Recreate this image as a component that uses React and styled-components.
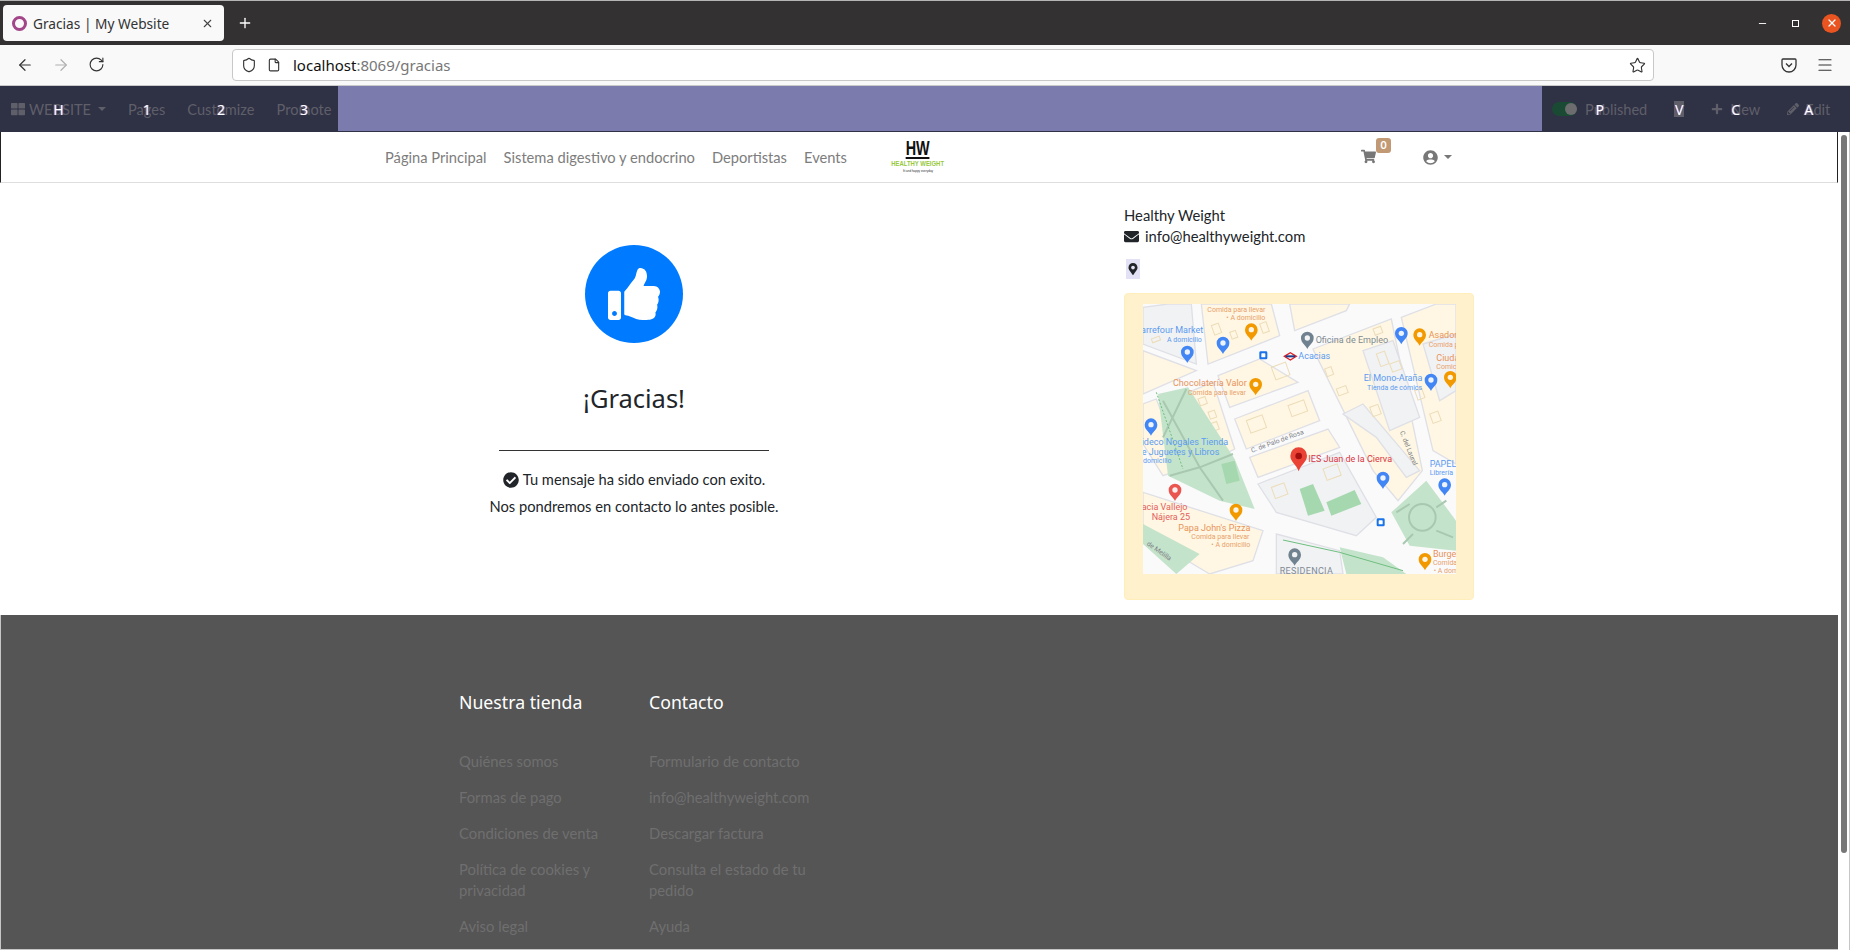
import styled, { createGlobalStyle } from "styled-components";
import { ArrowLeft, ArrowRight, RotateCw, Shield, File, Star, Menu, X, Plus, Minus } from "lucide-react";
import { FaThLarge, FaShoppingCart, FaUserCircle, FaEnvelope, FaCheckCircle, FaMapMarkerAlt, FaPlus, FaPencilAlt, FaThumbsUp } from "react-icons/fa";

const GlobalStyle = createGlobalStyle`
  html, body {
    margin: 0;
    padding: 0;
    height: 950px;
    overflow: hidden;
    background: #fff;
    font-family: "Lato", "Liberation Sans", sans-serif;
  }
  * { box-sizing: border-box; }
`;

const Page = styled.div`
  width: 1850px;
  height: 950px;
  display: flex;
  flex-direction: column;
  overflow: hidden;
`;

/* browser chrome */
const TabBar = styled.div`
  height: 45px;
  flex: none;
  background: #333131;
  border-top: 1px solid #b5b5b5;
  display: flex;
  align-items: center;
  padding: 0 9px 0 3px;
  color: #fff;
`;

const Tab = styled.div`
  width: 221px;
  height: 36px;
  background: #f9f9fa;
  border-radius: 4px;
  display: flex;
  align-items: center;
  padding: 0 10px 0 9px;
  color: #333;
  font: 13.7px "Noto Sans", sans-serif;
`;

const Favicon = styled.span`
  width: 15px;
  height: 15px;
  border: 3px solid #a24689;
  border-radius: 50%;
  margin-right: 6px;
  flex: none;
`;

const TabTitle = styled.span`
  flex: 1;
`;

const NewTab = styled.div`
  margin-left: 13px;
  display: flex;
`;

const WindowControls = styled.div`
  margin-left: auto;
  display: flex;
  align-items: center;
  gap: 21px;
`;

const WinButton = styled.span`
  width: 12px;
  height: 12px;
  display: flex;
  align-items: center;
  justify-content: center;
`;

const RestoreIcon = styled.span`
  width: 7px;
  height: 7px;
  border: 1.5px solid #fff;
`;

const CloseButton = styled.span`
  width: 19px;
  height: 19px;
  border-radius: 50%;
  background: #e95420;
  display: flex;
  align-items: center;
  justify-content: center;
`;

const Toolbar = styled.div`
  height: 41px;
  flex: none;
  background: #f9f9fa;
  border-bottom: 1px solid #c9c9c9;
  display: flex;
  align-items: center;
  padding: 0 16px 0 16px;
  color: #333;
`;

const NavButtons = styled.div`
  display: flex;
  gap: 18px;
  width: 216px;
`;

const UrlBox = styled.div`
  width: 1422px;
  height: 32px;
  background: #fff;
  border: 1px solid #c8c8c8;
  border-radius: 4px;
  display: flex;
  align-items: center;
  padding: 0 7px 0 8px;
  gap: 10px;
  font: 15px "Noto Sans", sans-serif;
`;

const UrlText = styled.span`
  flex: 1;
  margin-left: 2px;
  color: #777;
  & b {
    font-weight: 400;
    color: #111;
  }
`;

const ToolbarEnd = styled.div`
  margin-left: auto;
  display: flex;
  align-items: center;
  gap: 19px;
`;

/* odoo bar */
const EditBar = styled.div`
  height: 46px;
  flex: none;
  background: #7c7bad;
  border-bottom: 1px solid #2f3145;
  display: flex;
  justify-content: space-between;
`;

const BarSection = styled.div`
  background: #2f3145;
  display: flex;
  align-items: center;
  width: ${(p) => p.$width}px;
  padding: ${(p) => p.$padding};
  gap: ${(p) => p.$gap}px;
  color: #5f5f69;
  font-size: 14.6px;
`;

const BarItem = styled.div`
  position: relative;
  display: flex;
  align-items: center;
  gap: ${(p) => p.$gap || 4}px;
  white-space: nowrap;
`;

const Hotkey = styled.span`
  position: absolute;
  left: 50%;
  top: 50%;
  transform: translate(-50%, -50%);
  color: #fff;
  font: 14px "Noto Sans", sans-serif;
  text-shadow: 1px 0 0 #4a6fb0, -1px 0 0 #8a4a4a;
`;

const Caret = styled.span`
  display: inline-block;
  border-left: 4px solid transparent;
  border-right: 4px solid transparent;
  border-top: 4px solid ${(p) => p.$color || "#5f5f69"};
  margin-left: ${(p) => p.$left || 4}px;
`;

const Toggle = styled.span`
  width: 25px;
  height: 14px;
  border-radius: 7px;
  background: #1b4a34;
  position: relative;
  margin-right: 4px;
  &::after {
    content: "";
    position: absolute;
    right: 0;
    top: 1px;
    width: 12px;
    height: 12px;
    border-radius: 50%;
    background: #6d6d70;
  }
`;

const ViewChip = styled.span`
  width: 10px;
  height: 16px;
  background: #5f5f69;
  display: block;
`;

/* site */
const Viewport = styled.div`
  flex: 1;
  display: flex;
  min-height: 0;
`;

const Site = styled.div`
  width: 1838px;
  flex: none;
  display: flex;
  flex-direction: column;
`;

const Scrollbar = styled.div`
  flex: 1;
  background: #fff;
  border-right: 2px solid #c6c6c6;
  padding: 3px 2px 0 3px;
`;

const ScrollThumb = styled.div`
  width: 6px;
  height: 718px;
  border-radius: 3px;
  background: #777;
`;

const Nav = styled.nav`
  height: 51px;
  flex: none;
  display: flex;
  align-items: center;
  padding-left: 385px;
  padding-right: 385px;
  border-left: 1px solid #222;
  border-right: 1px solid #222;
  border-bottom: 1px solid #dedede;
  color: #7d7d7d;
  font-size: 14.7px;
`;

const NavLinks = styled.div`
  width: 506px;
  display: flex;
  gap: 17px;
  margin-left: -1px;
`;

const Logo = styled.div`
  width: 54px;
  height: 34px;
  display: flex;
  flex-direction: column;
  align-items: center;
  line-height: 1;
`;

const LogoMark = styled.span`
  color: #111;
  font: 700 20px/17px "Liberation Sans Narrow", "Liberation Sans", sans-serif;
  border-bottom: 2px solid #111;
  transform: scaleX(0.72);
`;

const LogoName = styled.span`
  color: #97c93d;
  font: 700 8px/10px "Liberation Sans", sans-serif;
  transform: scaleX(0.74);
  white-space: nowrap;
`;

const LogoTag = styled.span`
  color: #333;
  font: 3px/4px "Liberation Sans", sans-serif;
  white-space: nowrap;
`;

const NavEnd = styled.div`
  margin-left: auto;
  display: flex;
  align-items: center;
  color: #777;
`;

const CartLink = styled.span`
  position: relative;
  width: 30px;
  height: 16px;
  margin-right: 32px;
  display: block;
`;

const CartBadge = styled.span`
  position: absolute;
  left: 15px;
  top: -11px;
  width: 15px;
  height: 15px;
  border-radius: 3px;
  background: #c19a75;
  color: #fff;
  font-size: 10.5px;
  font-weight: 700;
  text-align: center;
  line-height: 15px;
`;

const Main = styled.main`
  height: 432px;
  flex: none;
  display: flex;
  justify-content: center;
  color: #212529;
`;

const LeftCol = styled.section`
  width: 760px;
  padding-top: 62px;
`;

const ThanksBox = styled.div`
  width: 570px;
  display: flex;
  flex-direction: column;
  align-items: center;
`;

const ThumbCircle = styled.div`
  width: 98px;
  height: 98px;
  border-radius: 50%;
  background: #007bff;
  color: #fff;
  display: flex;
  align-items: center;
  justify-content: center;
`;

const Title = styled.h1`
  margin: 34px 0 0;
  font: 400 25.5px/42px "Noto Sans", sans-serif;
  color: #212529;
`;

const Rule = styled.hr`
  width: 270px;
  margin: 31px 0 18px;
  border: 0;
  border-top: 1px solid #333;
`;

const Message = styled.p`
  margin: 0 0 6px;
  font-size: 14.7px;
  line-height: 21px;
  display: flex;
  align-items: center;
  gap: 4px;
`;

const RightCol = styled.aside`
  width: 380px;
  padding: 22px 15px 0;
  font-size: 14.8px;
  line-height: 21px;
`;

const ContactRow = styled.div`
  display: flex;
  align-items: center;
  gap: 6px;
`;

const PinChip = styled.span`
  width: 14px;
  height: 20px;
  margin: 12px 0 14px 2px;
  background: #e2e1f5;
  display: flex;
  align-items: center;
  justify-content: center;
`;

const MapCard = styled.div`
  width: 350px;
  height: 307px;
  background: #fff1cc;
  border: 1px solid #ffeeba;
  border-radius: 4px;
  padding: 10px 18px;
`;

const MapSvg = styled.svg`
  width: 313px;
  height: 270px;
  display: block;
`;

const Footer = styled.footer`
  flex: 1;
  background: #555;
  border-left: 1px solid #c6c6c6;
  border-bottom: 1px solid #c6c6c6;
  display: flex;
  gap: 30px;
  padding: 74px 0 0 458px;
  overflow: hidden;
`;

const FooterCol = styled.div`
  width: 160px;
`;

const FooterTitle = styled.h5`
  margin: 0 0 35px;
  color: #fff;
  font: 400 17.7px/27px "Noto Sans", sans-serif;
`;

const FooterLink = styled.div`
  color: #6f6f6f;
  font-size: 14.8px;
  line-height: 21px;
  margin-bottom: 15px;
`;

const storeLinks = ["Quiénes somos", "Formas de pago", "Condiciones de venta", "Política de cookies y privacidad", "Aviso legal"];
const contactLinks = ["Formulario de contacto", "info@healthyweight.com", "Descargar factura", "Consulta el estado de tu pedido", "Ayuda"];

// map pin in the 3x coordinates of the map drawing
const Pin = ({ x, y, color }) => (
  <g transform={`translate(${x} ${y})`}>
    <path d="M0 27C-4 16-19 10-19 -6a19 19 0 0 1 38 0C19 10 4 16 0 27Z" fill={color} />
    <circle cx="0" cy="-6" r="8" fill="#fff" opacity="0.9" />
  </g>
);

const roads = "#dfe0e6";
const yellow = "#fff7e3";
const gray = "#f1f2f4";
const green = "#c4e3cb";

// small building outlines inside the blocks
const buildings = [
  [205, 65, 22, 30], [260, 85, 18, 22], [350, 60, 20, 30], [25, 105, 25, 12], [385, 190, 45, 40],
  [310, 350, 50, 40], [435, 305, 50, 35], [545, 195, 20, 24], [580, 255, 30, 22], [680, 310, 26, 30],
  [165, 285, 22, 22], [195, 325, 20, 22], [200, 360, 22, 24], [385, 550, 40, 36], [540, 495, 45, 36],
  [860, 330, 26, 30], [700, 150, 26, 40], [690, 75, 24, 20], [740, 180, 30, 26], [815, 260, 22, 30],
];

const MapDrawing = () => (
  <MapSvg viewBox="0 0 939 810">
    <rect width="939" height="810" fill="#fafafb" />
    <g stroke={roads} strokeWidth="4">
      <polygon points="75,0 145,0 160,180 0,120 0,10" fill={gray} />
      <polygon points="175,0 385,0 410,95 195,180" fill={yellow} />
      <polygon points="440,0 620,0 610,20 455,80" fill={yellow} />
      <polygon points="510,135 745,45 838,500 765,590 690,500" fill={yellow} />
      <polygon points="600,330 660,300 830,500 790,520 700,400" fill={gray} />
      <polygon points="660,140 750,110 830,340 740,380" fill={gray} />
      <polygon points="775,40 880,0 939,0 939,480 870,440" fill={yellow} />
      <polygon points="840,120 939,90 939,260 890,290" fill={gray} />
      <polygon points="225,215 350,165 465,235 260,310" fill={yellow} />
      <polygon points="275,345 495,260 530,350 310,435" fill={yellow} />
      <polygon points="320,460 555,375 590,430 345,520" fill={yellow} />
      <polygon points="345,540 590,445 700,640 640,695 400,625" fill={gray} />
      <polygon points="135,265 210,235 275,435 215,465" fill={yellow} />
      <polygon points="0,300 40,285 120,495 60,515 0,420" fill={yellow} />
      <polygon points="0,565 360,680 330,770 200,810 0,690" fill={yellow} />
      <polygon points="400,690 590,740 600,810 400,810" fill={gray} />
      <polygon points="0,140 160,200 0,270" fill={yellow} />
    </g>
    <g fill="none" stroke="#ecdcb8" strokeWidth="3">
      {buildings.map(([x, y, w, h]) => (
        <rect key={`${x}-${y}`} x={x} y={y} width={w} height={h} transform={`rotate(-20 ${x} ${y})`} />
      ))}
    </g>
    <g fill={green}>
      <polygon points="45,270 135,250 275,465 335,615 230,590 75,515" />
      <polygon points="0,660 170,750 100,810 0,720" />
      <polygon points="745,625 850,530 939,650 939,740 800,725" />
      <polygon points="590,730 720,760 790,810 610,810" />
    </g>
    <g fill="#a5d8ae">
      <polygon points="470,555 510,540 545,620 495,635" />
      <polygon points="550,595 635,558 655,600 565,635" />
      <polygon points="235,480 275,470 290,530 250,540" />
    </g>
    <g fill="none" stroke="#a8c9b0" strokeWidth="6">
      <path d="M60 290 170 490 240 590M130 255 60 400M170 490 80 515M170 490 270 450" />
      <circle cx="838" cy="640" r="40" />
      <path d="M800 600 760 625M880 610 910 590M810 690 780 720M880 680 930 700" />
    </g>
    <path d="M420 708 590 745 780 800" fill="none" stroke="#6fbf7f" strokeWidth="3" />
    <path d="M40 265 120 495" fill="none" stroke="#6fbf7f" strokeWidth="3" strokeDasharray="6 5" />

    <Pin x={240} y={123} color="#4285f4" />
    <Pin x={133} y={150} color="#4285f4" />
    <Pin x={325} y={83} color="#f29900" />
    <Pin x={493} y={108} color="#70828f" />
    <Pin x={775} y={94} color="#4285f4" />
    <Pin x={830} y={98} color="#f29900" />
    <Pin x={338} y={247} color="#f29900" />
    <Pin x={864} y={234} color="#4285f4" />
    <Pin x={922} y={226} color="#f29900" />
    <Pin x={24} y={368} color="#4285f4" />
    <Pin x={720} y={528} color="#4285f4" />
    <Pin x={905} y={548} color="#4285f4" />
    <Pin x={96} y={564} color="#ea5550" />
    <Pin x={279} y={624} color="#f29900" />
    <Pin x={455} y={758} color="#70828f" />
    <Pin x={846} y={772} color="#f29900" />

    <rect x="349" y="142" width="24" height="24" rx="4" fill="#1a73e8" />
    <rect x="355" y="148" width="12" height="12" rx="2" fill="#fff" />
    <rect x="701" y="643" width="24" height="24" rx="4" fill="#1a73e8" />
    <rect x="707" y="649" width="12" height="12" rx="2" fill="#fff" />
    <path d="M424 157 442 146 460 157 442 168Z" fill="#fff" stroke="#e01f26" strokeWidth="4" />
    <rect x="428" y="154" width="28" height="6" fill="#1a3a8a" />

    <path d="M467 502C460 480 442 474 442 455a25 25 0 0 1 50 0C492 474 474 480 467 502Z" fill="#ea4335" />
    <circle cx="467" cy="456" r="10" fill="#a50e0e" />

    <g fontFamily="'Roboto', 'Liberation Sans', sans-serif" fontSize="27">
      <g fill="#e8a06a" fontSize="21">
        <text x="193" y="24">Comida para llevar</text>
        <text x="250" y="48">• A domicilio</text>
        <text x="135" y="272">Comida para llevar</text>
        <text x="145" y="705">Comida para llevar</text>
        <text x="205" y="729">• A domicilio</text>
        <text x="857" y="128">Comida p</text>
        <text x="880" y="194">Comic</text>
        <text x="870" y="784">Comida</text>
        <text x="872" y="808">• A dom</text>
      </g>
      <g fill="#e8935a">
        <text x="90" y="246">Chocolatería Valor</text>
        <text x="106" y="680">Papa John's Pizza</text>
        <text x="857" y="102">Asador</text>
        <text x="880" y="170">Ciuda</text>
        <text x="870" y="758">Burge</text>
      </g>
      <g fill="#5c9bf0">
        <text x="-6" y="88">arrefour Market</text>
        <text x="662" y="232">El Mono-Araña</text>
        <text x="-4" y="424">ideco Nogales Tienda</text>
        <text x="-4" y="453">e Juguetes y Libros</text>
        <text x="860" y="488">PAPEL</text>
        <text x="466" y="165">Acacias</text>
      </g>
      <g fill="#5c9bf0" fontSize="21">
        <text x="72" y="114">A domicilio</text>
        <text x="672" y="259">Tienda de cómics</text>
        <text x="0" y="478">domicilio</text>
        <text x="860" y="513">Librería</text>
      </g>
      <g fill="#808a92">
        <text x="518" y="118">Oficina de Empleo</text>
        <text x="410" y="810" letterSpacing="1">RESIDENCIA</text>
      </g>
      <g fill="#7c7f85" fontSize="20">
        <text x="327" y="446" transform="rotate(-20 327 446)">C. de Palo de Rosa</text>
        <text x="770" y="384" transform="rotate(68 770 384)">C. del Laurel</text>
        <text x="10" y="722" transform="rotate(35 10 722)">de Melilla</text>
      </g>
      <text x="496" y="475" fill="#d9363e">IES Juan de la Cierva</text>
      <g fill="#e4605c">
        <text x="-4" y="619">acia Vallejo</text>
        <text x="26" y="649">Nájera 25</text>
      </g>
    </g>
  </MapSvg>
);

const PocketIcon = () => (
  <svg width="16" height="16" viewBox="0 0 16 16" fill="none" stroke="#333" strokeWidth="1.3">
    <path d="M2 2h12a1 1 0 0 1 1 1v5a7 7 0 0 1-14 0V3a1 1 0 0 1 1-1Z" />
    <path d="M5 6.5 8 9.5 11 6.5" />
  </svg>
);

const App = () => (
  <Page>
    <GlobalStyle />
    <TabBar>
      <Tab>
        <Favicon />
        <TabTitle>Gracias | My Website</TabTitle>
        <X size={13} color="#444" />
      </Tab>
      <NewTab><Plus size={16} color="#fff" /></NewTab>
      <WindowControls>
        <WinButton><Minus size={11} color="#fff" /></WinButton>
        <WinButton><RestoreIcon /></WinButton>
        <CloseButton><X size={12} color="#fff" strokeWidth={2.5} /></CloseButton>
      </WindowControls>
    </TabBar>
    <Toolbar>
      <NavButtons>
        <ArrowLeft size={18} strokeWidth={1.6} />
        <ArrowRight size={18} strokeWidth={1.6} color="#b0b0b0" />
        <RotateCw size={17} strokeWidth={1.6} />
      </NavButtons>
      <UrlBox>
        <Shield size={16} strokeWidth={1.7} />
        <File size={14} strokeWidth={1.9} />
        <UrlText><b>localhost</b>:8069/gracias</UrlText>
        <Star size={17} strokeWidth={1.6} />
      </UrlBox>
      <ToolbarEnd>
        <PocketIcon />
        <Menu size={18} strokeWidth={1.6} />
      </ToolbarEnd>
    </Toolbar>
    <EditBar>
      <BarSection $width={338} $padding="1px 0 0 11px" $gap={22}>
        <BarItem>
          <FaThLarge size={14} />
          WEBSITE
          <Caret $left={3} />
          <Hotkey>H</Hotkey>
        </BarItem>
        <BarItem>Pages<Hotkey>1</Hotkey></BarItem>
        <BarItem>Customize<Hotkey>2</Hotkey></BarItem>
        <BarItem>Promote<Hotkey>3</Hotkey></BarItem>
      </BarSection>
      <BarSection $width={308} $padding="1px 0 0 10px" $gap={27}>
        <BarItem $gap={0}><Toggle />Published<Hotkey>P</Hotkey></BarItem>
        <BarItem><ViewChip /><Hotkey>V</Hotkey></BarItem>
        <BarItem $gap={7}><FaPlus size={12} />New<Hotkey>C</Hotkey></BarItem>
        <BarItem $gap={6}><FaPencilAlt size={12} />Edit<Hotkey>A</Hotkey></BarItem>
      </BarSection>
    </EditBar>
    <Viewport>
      <Site>
        <Nav>
          <NavLinks>
            <span>Página Principal</span>
            <span>Sistema digestivo y endocrino</span>
            <span>Deportistas</span>
            <span>Events</span>
          </NavLinks>
          <Logo>
            <LogoMark>HW</LogoMark>
            <LogoName>HEALTHY WEIGHT</LogoName>
            <LogoTag>fit and happy everyday</LogoTag>
          </Logo>
          <NavEnd>
            <CartLink>
              <FaShoppingCart size={15} />
              <CartBadge>0</CartBadge>
            </CartLink>
            <FaUserCircle size={15} />
            <Caret $color="#777" $left={6} />
          </NavEnd>
        </Nav>
        <Main>
          <LeftCol>
            <ThanksBox>
              <ThumbCircle><FaThumbsUp size={52} /></ThumbCircle>
              <Title>¡Gracias!</Title>
              <Rule />
              <Message><FaCheckCircle size={16} />Tu mensaje ha sido enviado con exito.</Message>
              <Message>Nos pondremos en contacto lo antes posible.</Message>
            </ThanksBox>
          </LeftCol>
          <RightCol>
            <div>Healthy Weight</div>
            <ContactRow><FaEnvelope size={15} />info@healthyweight.com</ContactRow>
            <PinChip><FaMapMarkerAlt size={12} /></PinChip>
            <MapCard><MapDrawing /></MapCard>
          </RightCol>
        </Main>
        <Footer>
          <FooterCol>
            <FooterTitle>Nuestra tienda</FooterTitle>
            {storeLinks.map((l) => <FooterLink key={l}>{l}</FooterLink>)}
          </FooterCol>
          <FooterCol>
            <FooterTitle>Contacto</FooterTitle>
            {contactLinks.map((l) => <FooterLink key={l}>{l}</FooterLink>)}
          </FooterCol>
        </Footer>
      </Site>
      <Scrollbar><ScrollThumb /></Scrollbar>
    </Viewport>
  </Page>
);

export default App;
